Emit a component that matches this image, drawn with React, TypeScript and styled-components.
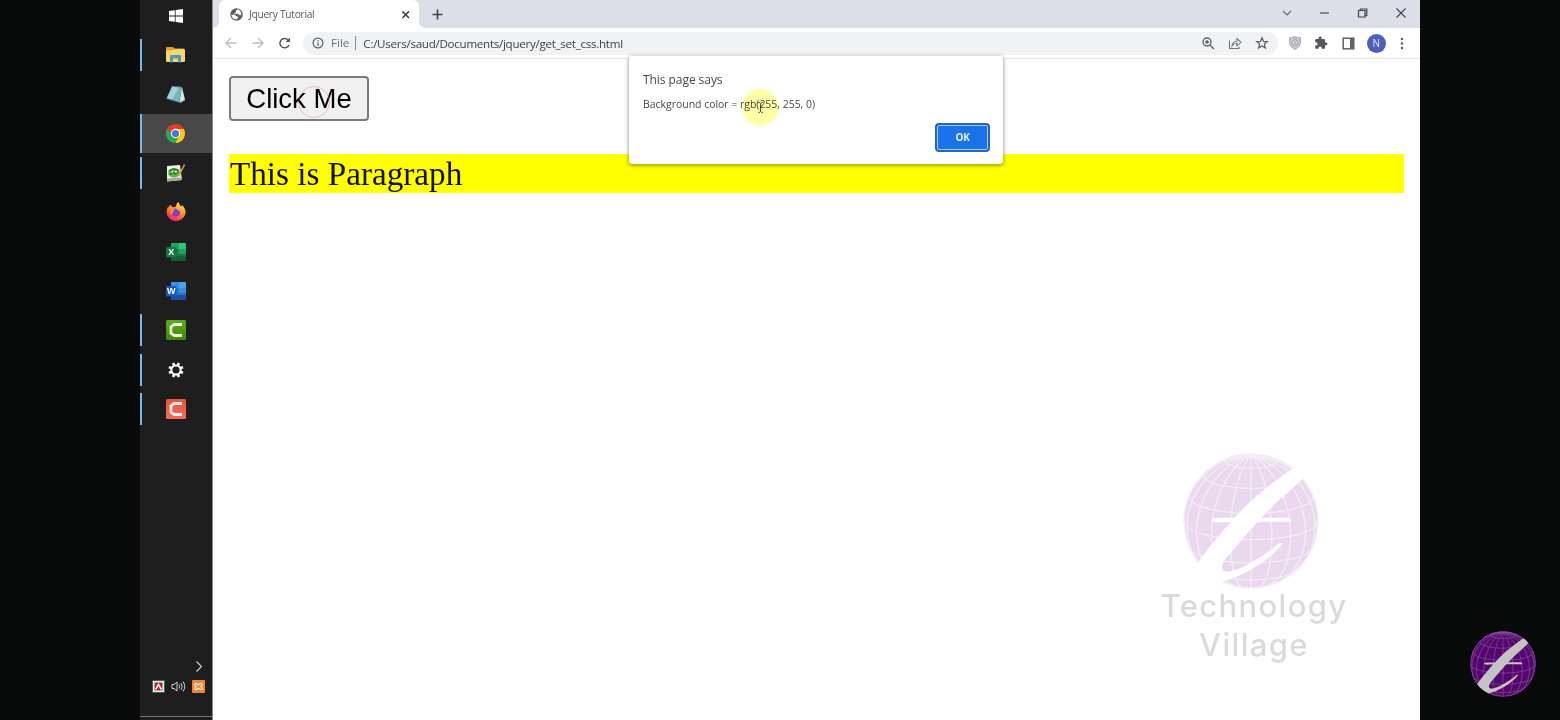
import React from "react";
import styled, { createGlobalStyle, css } from "styled-components";

const Global = createGlobalStyle`
  * { box-sizing: border-box; }
  body { margin: 0; background: #080b0a; overflow: hidden; }
`;

const ui = css`font-family: "Open Sans", "Noto Sans", sans-serif;`;

const Screen = styled.div`
  display: grid;
  grid-template-columns: 140px 73px 1207px 140px;
  width: 1560px;
  height: 720px;
  overflow: hidden;
  background: #080b0a;
`;

const Gutter = styled.div`
  display: flex;
  align-items: flex-end;
  justify-content: flex-end;
  padding: 0 24px 23px 0;
  background: #080b0a;
`;

/* ---------- Taskbar ---------- */

const Taskbar = styled.nav`
  display: flex;
  flex-direction: column;
  justify-content: space-between;
  height: 720px;
  background: #1e1e1e;
  border-right: 1px solid #8a8a8a;
`;

const AppList = styled.div`
  display: flex;
  flex-direction: column;
  margin-top: -4px;
`;

const AppSlot = styled.div<{ $running?: boolean; $active?: boolean }>`
  display: grid;
  grid-template-columns: 2px 1fr 3px;
  align-items: center;
  justify-items: center;
  height: 39.35px;
  background: ${(p) => (p.$active ? "#484848" : "transparent")};
  &::before {
    content: "";
    width: 2px;
    height: ${(p) => (p.$active ? "39px" : "32px")};
    background: ${(p) => (p.$running || p.$active ? "#76b9ed" : "transparent")};
  }
  svg { display: block; }
`;

const Tray = styled.div`
  display: flex;
  flex-direction: column;
  height: 61px;
`;

const TrayMore = styled.div`
  display: flex;
  justify-content: flex-end;
  padding-right: 9px;
  height: 20px;
`;

const TrayIcons = styled.div`
  display: flex;
  align-items: center;
  gap: 6px;
  padding-left: 12px;
  height: 15px;
`;

const TrayEdge = styled.div`
  margin-top: 22px;
  height: 1px;
  background: #777;
`;

/* ---------- Browser ---------- */

const Browser = styled.main`
  display: flex;
  flex-direction: column;
  height: 720px;
  background: #fff;
`;

const TabStrip = styled.div`
  display: flex;
  align-items: stretch;
  height: 28px;
  padding-left: 6px;
  background: #dcdfe8;
`;

const Tab = styled.div`
  position: relative;
  display: flex;
  align-items: center;
  width: 200px;
  padding: 0 8px 0 11px;
  background: #fff;
  border-radius: 6px 6px 0 0;
  &::before, &::after {
    content: "";
    position: absolute;
    bottom: 0;
    width: 6px;
    height: 6px;
  }
  &::before { left: -6px; background: radial-gradient(circle at 0 0, transparent 5.5px, #fff 6px); }
  &::after { right: -6px; background: radial-gradient(circle at 100% 0, transparent 5.5px, #fff 6px); }
`;

const TabTitle = styled.span`
  ${ui}
  flex: 1;
  margin-left: 6px;
  font-size: 10.2px;
  line-height: 14px;
  letter-spacing: -0.27px;
  color: #55585c;
`;

const NewTab = styled.div`
  display: flex;
  align-items: center;
  margin-left: 12px;
`;

const WindowButtons = styled.div`
  display: flex;
  align-items: center;
  margin-left: auto;
  padding-right: 13px;
  gap: 26px;
  padding-bottom: 3px;
  svg { display: block; }
`;

const Toolbar = styled.div`
  display: flex;
  align-items: center;
  height: 31px;
  padding: 0 16px 0 11px;
  border-bottom: 1px solid #e6e7e9;
`;

const NavButtons = styled.div`
  display: flex;
  align-items: center;
  gap: 13px;
`;

const Omnibox = styled.div`
  ${ui}
  display: flex;
  align-items: center;
  width: 975px;
  height: 23px;
  margin-left: 11px;
  padding: 0 9px 0 9px;
  border-radius: 12px;
  background: #f0f2f4;
  font-size: 11.6px;
`;

const Scheme = styled.span`
  margin-left: 7px;
  padding-right: 6px;
  line-height: 14px;
  border-right: 1px solid #85888c;
  color: #6d7074;
`;

const Url = styled.span`
  flex: 1;
  margin-left: 7px;
  letter-spacing: -0.28px;
  color: #3f4246;
`;

const BoxActions = styled.div`
  display: flex;
  align-items: center;
  gap: 13px;
`;

const Extensions = styled.div`
  display: flex;
  align-items: center;
  justify-content: space-between;
  width: 115px;
  margin-left: auto;
`;

const Avatar = styled.span`
  ${ui}
  display: grid;
  place-items: center;
  width: 19px;
  height: 19px;
  margin: 0 1px 0 -1px;
  border-radius: 50%;
  background: #4e5fbb;
  color: #e4e7f8;
  font-size: 10px;
`;

const Viewport = styled.section`
  position: relative;
  flex: 1;
  padding: 17px 16px 0;
`;

const ClickButton = styled.button`
  display: block;
  width: 140px;
  height: 45px;
  padding: 0;
  border: 2px solid #7b7b7b;
  border-radius: 4px;
  background: #f0f0f0;
  color: #000;
  font: 27.5px "Liberation Sans", Arial, sans-serif;
`;

const Paragraph = styled.p`
  margin: 33px 0 0;
  padding-left: 1px;
  height: 39px;
  background: #ff0;
  color: #111;
  font: 33.2px/40px "Liberation Serif", "Times New Roman", serif;
`;

const ClickRipple = styled.span`
  position: absolute;
  left: 85px;
  top: 27px;
  width: 32px;
  height: 32px;
  border: 1.5px solid rgba(240, 110, 125, 0.4);
  border-radius: 50%;
`;

const Dialog = styled.div`
  ${ui}
  position: absolute;
  left: 416px;
  top: -3px;
  display: flex;
  flex-direction: column;
  width: 374px;
  height: 108px;
  padding: 16px 13px 12px 14px;
  border-radius: 3px;
  background: #fff;
  box-shadow: 0 1px 4px rgba(0, 0, 0, 0.5);
  color: #46484b;
`;

const DialogTitle = styled.div`
  font-size: 12px;
  line-height: 16px;
  letter-spacing: -0.06px;
`;

const DialogText = styled.div`
  margin-top: 9px;
  font-size: 10.5px;
  line-height: 14px;
  letter-spacing: -0.03px;
`;

const OkButton = styled.button`
  ${ui}
  align-self: flex-end;
  margin-top: auto;
  width: 55px;
  height: 29px;
  padding: 0 0 1px;
  border: 2px solid #1f66ca;
  border-radius: 4px;
  box-shadow: inset 0 0 0 1px #a9cbf8;
  background: #1a73e8;
  color: #e8f2ff;
  font-size: 10px;
  font-weight: 700;
  letter-spacing: -0.3px;
`;

const Pointer = styled.div`
  position: absolute;
  left: 529px;
  top: 30px;
  display: grid;
  place-items: center;
  width: 37px;
  height: 37px;
  border-radius: 50%;
  background: #ffffa8;
  mix-blend-mode: multiply;
`;

const Watermark = styled.div`
  position: absolute;
  right: 66px;
  top: 394px;
  display: flex;
  flex-direction: column;
  align-items: center;
  width: 200px;
  color: #dadada;
  font: 500 31px/38.5px Inter, Lato, sans-serif;
  letter-spacing: 1.35px;
  svg { display: block; margin: 0 0 -2px -6px; }
`;

/* ---------- Globe logo ---------- */

const TILT = (16 * Math.PI) / 180;

function arc(points: [number, number][]) {
  let d = "";
  let pen = false;
  points.forEach(([lat, lon]) => {
    const f = (lat * Math.PI) / 180;
    const l = (lon * Math.PI) / 180;
    const depth = Math.sin(f) * Math.sin(TILT) + Math.cos(f) * Math.cos(l) * Math.cos(TILT);
    if (depth < 0) {
      pen = false;
      return;
    }
    const x = 100 * Math.cos(f) * Math.sin(l);
    const y = -100 * (Math.sin(f) * Math.cos(TILT) - Math.cos(f) * Math.cos(l) * Math.sin(TILT));
    d += `${pen ? "L" : "M"}${x.toFixed(1)} ${y.toFixed(1)}`;
    pen = true;
  });
  return d;
}

const range = (from: number, to: number, step: number) =>
  Array.from({ length: Math.floor((to - from) / step) + 1 }, (_, i) => from + i * step);

const GRID = [
  ...[67.5, 45, 22.5, 0, -22.5, -45].map((lat) => arc(range(-180, 180, 4).map((lon) => [lat, lon]))),
  ...range(-180, 162, 18).map((lon) => arc(range(-90, 90, 4).map((lat) => [lat, lon]))),
].join("");

type GlobeProps = { size: number; fill: string; line: string; mark: string; id: string };

const Globe = ({ size, fill, line, mark, id }: GlobeProps) => (
  <svg width={size} height={size} viewBox="-101 -101 202 202">
    <clipPath id={id}><circle r="101" /></clipPath>
    <g clipPath={`url(#${id})`}>
      <circle r="100" fill={fill} />
      <path d={GRID} fill="none" stroke={line} strokeWidth="2.1" />
      <circle r="99" fill="none" stroke={line} strokeWidth="2" />
      <path
        fill={mark}
        d="M64 -80C40 -62 10 -42 -12 -18C-32 3 -58 32 -82 66L-50 92C-15 84 28 60 47 33C45 31 40 34 36 38C16 54 -14 72 -32 75C-46 77 -46 66 -36 54C-11 25 22 -15 52 -40L82 -67Z"
      />
      <path fill={mark} d="M-58 -2C-56 -6 -48 -4 56 -5Q62 -2 58 1L-20 1C-48 2 -58 4 -58 -2Z" />
    </g>
  </svg>
);

/* ---------- Taskbar icons ---------- */

const WindowsIcon = () => (
  <svg width="14" height="14" viewBox="0 0 14 14" fill="#fff">
    <path d="M0 2.1L5.8 1.2V6.6H0ZM6.6 1.1L14 0V6.6H6.6ZM0 7.4H5.8V12.8L0 11.9ZM6.6 7.4H14V14L6.6 12.9Z" />
  </svg>
);

const FolderIcon = () => (
  <svg width="19" height="16" viewBox="0 0 19 16">
    <path d="M0 1Q0 0 1 0H7L9 1.5H18V7H0Z" fill="#e0a128" />
    <path d="M0 3.5L8 3L9.5 2H18Q19 2 19 3V14Q19 15 18 15H1Q0 15 0 14Z" fill="#fbd569" />
    <path d="M4 15.5V9Q4 8 5 8H14Q15 8 15 9V15.5H12V11.5H7V15.5Z" fill="#4b9cc0" />
  </svg>
);

const NotebookIcon = () => (
  <svg width="20" height="19" viewBox="0 0 20 19">
    <path d="M6 1L16 2L19 15L14 18L0 14Z" fill="#486f79" />
    <path d="M6 1.5L16 2.5L13 17L1 13Z" fill="#76b4c2" />
    <path d="M6.5 2L13 2.6L6 14.6L1 13Z" fill="#b5dbe2" opacity=".7" />
    <path d="M16 2.5L19 15L13.5 17.2Z" fill="#dbe8e8" />
    <path d="M6 1.2L16 2.2" stroke="#778d90" strokeDasharray="1 1" />
    <path d="M14 18L19 15" stroke="#967b50" />
  </svg>
);

const ChromeIcon = () => (
  <svg width="19" height="19" viewBox="-10 -10 20 20">
    <path d="M0 0L-8.66 -5A10 10 0 0 1 8.66 -5Z" fill="#e33b2e" />
    <path d="M0 0L8.66 -5A10 10 0 0 1 0 10Z" fill="#fbc916" />
    <path d="M0 0L0 10A10 10 0 0 1 -8.66 -5Z" fill="#2da94f" />
    <path d="M0 -4.8H8.8L4 3Z" fill="#fbc916" />
    <path d="M4.1 2.4L-0.4 10L-4 3Z" fill="#2da94f" />
    <path d="M-4.1 2.4L-8.7 -5L0 -4.8Z" fill="#e33b2e" />
    <path d="M-4.1 2.4L-8.7 -5A10 10 0 0 0 -.4 10L2 5Z" fill="#2da94f" />
    <circle r="4.9" fill="#fff" />
    <circle r="3.8" fill="#3b7be8" />
  </svg>
);

const NotepadPlusIcon = () => (
  <svg width="19" height="18" viewBox="0 0 19 18">
    <path d="M1 2L14 1L16 16L1 17.5Z" fill="#e9efe4" />
    <path d="M1 14.5L16 13.5V16L1 17.5Z" fill="#a3a99a" />
    <ellipse cx="8" cy="9" rx="6" ry="4.6" fill="#5fb947" />
    <path d="M3 7Q8 3 13 7M4 11L7 8L9 10L12 8" stroke="#276f25" strokeWidth="1.4" fill="none" />
    <circle cx="6.5" cy="7.8" r="1" fill="#eaf7dc" />
    <circle cx="10" cy="7.8" r="1" fill="#eaf7dc" />
    <path d="M18.5 0.5L12.8 12" stroke="#d59b35" strokeWidth="1.6" />
  </svg>
);

const FirefoxIcon = () => (
  <svg width="20" height="20" viewBox="0 0 20 20">
    <defs>
      <linearGradient id="fox" x1=".8" y1="0" x2=".25" y2="1">
        <stop offset="0" stopColor="#fff04a" />
        <stop offset=".4" stopColor="#ff9a2e" />
        <stop offset=".75" stopColor="#ff4a45" />
        <stop offset="1" stopColor="#e8257a" />
      </linearGradient>
    </defs>
    <path d="M12.5 0Q13 3 15.5 4.5L16 3Q20 7 19.5 11A9.6 9.3 0 0 1 .5 11Q.2 7 2.5 4V5.5Q4 3 5 2.8Q5 4.5 7 5.2Q10.500 5 10.2 3.2Q10.600 1 12.500 0Z" fill="url(#fox)" />
    <circle cx="10" cy="10.5" r="4" fill="#7b3fc9" />
    <path d="M3.500 6.500Q6 5 9 7.500Q7 8 7.500 10Q6 11 6 12.500Q3 10 3.500 6.500Z" fill="#ff8a2b" />
    <path d="M10 6Q14 6 14.500 10Q13 8 11.500 8Z" fill="#ffae34" />
  </svg>
);

type OfficeProps = { shades: string[]; badge: string; letter: string };

const OfficeLetter = styled.text`
  font: 700 9px "Liberation Sans", sans-serif;
  fill: #fff;
`;

const OfficeIcon = ({ shades, badge, letter }: OfficeProps) => (
  <svg width="20" height="18" viewBox="0 0 20 18">
    <rect x="5" width="15" height="18" rx="1" fill={shades[2]} />
    <path d="M5 1Q5 0 6 0H12.500V6H5Z" fill={shades[1]} />
    <path d="M12.500 0H19Q20 0 20 1V6H12.500Z" fill={shades[0]} />
    <rect x="12.500" y="6" width="7.500" height="5" fill={shades[1]} />
    <rect x="5" y="13" width="15" height="5" rx="1" fill={shades[3]} />
    <rect y="4" width="10.500" height="10.500" rx="1" fill={badge} />
    <OfficeLetter x="5.200" y="12.400" textAnchor="middle">{letter}</OfficeLetter>
  </svg>
);

const CamtasiaIcon = ({ from, to }: { from: string; to: string }) => (
  <svg width="20" height="20" viewBox="0 0 20 20">
    <defs>
      <linearGradient id={`cam${from.slice(1)}`} x1="0" y1="0" x2="0" y2="1">
        <stop offset="0" stopColor={from} />
        <stop offset="1" stopColor={to} />
      </linearGradient>
    </defs>
    <rect width="20" height="20" rx="1.500" fill={`url(#cam${from.slice(1)})`} />
    <path d="M16 4.500H8.200L5 7V13L8.200 15.500H16" fill="none" stroke="#fff" strokeOpacity=".92" strokeWidth="2.800" />
    <path d="M6.200 6.500V13.500" stroke={to} strokeOpacity=".35" strokeWidth="1" />
  </svg>
);

const GearIcon = () => (
  <svg width="16" height="16" viewBox="-8 -8 16 16">
    <circle r="4.600" fill="none" stroke="#fff" strokeWidth="2" />
    {range(22.5, 337.5, 45).map((a) => (
      <rect key={a} x="-1.300" y="-7.600" width="2.600" height="3" fill="#fff" transform={`rotate(${a})`} />
    ))}
  </svg>
);

const EXCEL = ["#32c37d", "#22a366", "#1a7544", "#185c37"];
const WORD = ["#43a5ee", "#3490e0", "#2373cf", "#1a4f9f"];

const apps: { icon: React.ReactNode; running?: boolean; active?: boolean }[] = [
  { icon: <WindowsIcon /> },
  { icon: <FolderIcon />, running: true },
  { icon: <NotebookIcon /> },
  { icon: <ChromeIcon />, active: true },
  { icon: <NotepadPlusIcon />, running: true },
  { icon: <FirefoxIcon /> },
  { icon: <OfficeIcon shades={EXCEL} badge="#137843" letter="X" /> },
  { icon: <OfficeIcon shades={WORD} badge="#1b58ba" letter="W" /> },
  { icon: <CamtasiaIcon from="#5fa91c" to="#3f8a05" />, running: true },
  { icon: <GearIcon />, running: true },
  { icon: <CamtasiaIcon from="#ee5340" to="#f56a5a" />, running: true },
];

const Glyph = ({ w = 14, h = w, box = `0 0 ${w} ${h}`, color = "#5f6368", sw = 1.3, children }: {
  w?: number; h?: number; box?: string; color?: string; sw?: number; children: React.ReactNode;
}) => (
  <svg width={w} height={h} viewBox={box} fill="none" stroke={color} strokeWidth={sw}>{children}</svg>
);

export default function App() {
  return (
    <>
      <Global />
      <Screen>
        <Gutter />
        <Taskbar>
          <AppList>
            {apps.map((a, i) => (
              <AppSlot key={i} $running={a.running} $active={a.active}>{a.icon}</AppSlot>
            ))}
          </AppList>
          <Tray>
            <TrayMore>
              <Glyph w={8} h={14} color="#d8d8d8" sw={1.1}><path d="M1.500 2.500L6.500 7.500L1.500 12.500" /></Glyph>
            </TrayMore>
            <TrayIcons>
              <svg width="13" height="13" viewBox="0 0 13 13">
                <rect width="13" height="13" fill="#2c6a4c" />
                <rect x="1" y="1" width="11" height="11" fill="#f2eeee" />
                <rect x="2.500" y="2.500" width="8" height="8" fill="#b5202c" />
                <path d="M3.500 9.500L6.500 4.500L9.500 9.500" fill="none" stroke="#fff" strokeWidth="1.500" />
              </svg>
              <Glyph w={15} h={13} color="#d0d0d0" sw={1}>
                <path d="M1 4.500H3L6 2V11L3 8.500H1ZM8 4.500Q9.500 6.500 8 8.500M10 3Q12.500 6.500 10 10M12 1.500Q15.500 6.500 12 11.500" />
              </Glyph>
              <svg width="13" height="13" viewBox="0 0 13 13">
                <rect width="13" height="13" rx="1" fill="#ef8336" />
                <path d="M4.500 3.500Q2.500 3 2.800 5L4.200 6.500L2.800 8Q2.500 10 4.500 9.500L6.500 8.300L8.500 9.500Q10.500 10 10.200 8L8.800 6.500L10.200 5Q10.500 3 8.500 3.500L6.500 4.700Z" fill="none" stroke="#ffe9d5" strokeWidth="1.300" />
              </svg>
            </TrayIcons>
            <TrayEdge />
          </Tray>
        </Taskbar>

        <Browser>
          <TabStrip>
            <Tab>
              <svg width="13" height="13" viewBox="0 0 24 24">
                <circle cx="12" cy="12" r="11.500" fill="#5a5d61" />
                <path d="M2.500 12L9 12.500L12 15.500H15V18L12 21L7 20.500A10 10 0 0 1 2.500 12ZM14 2.500L11 5V8L8 9.500L10 11L14 10L16 12.500L20.500 13.500A9 9 0 0 0 14 2.500Z" fill="#fff" />
              </svg>
              <TabTitle>Jquery Tutorial</TabTitle>
              <Glyph w={11} color="#3c3f43" sw={1.5}><path d="M2.400 2.400L9 9M9 2.400L2.400 9" /></Glyph>
            </Tab>
            <NewTab>
              <Glyph w={13} color="#404347" sw={1.6}><path d="M6.500 1.500V11.500M1.500 6.500H11.500" /></Glyph>
            </NewTab>
            <WindowButtons>
              <Glyph w={12} color="#6a6d72" sw={1.2}><path d="M2 4L6 8L10 4" /></Glyph>
              <Glyph w={12} color="#444" sw={1.1}><path d="M1 6H10" /></Glyph>
              <Glyph w={12} color="#444" sw={1.2}><path d="M1.500 3.500H8V10H1.500ZM2.800 3.500L3.500 2H9.800V8.500L8 9" /></Glyph>
              <Glyph w={12} color="#444" sw={1.1}><path d="M1.500 1.500L10.500 10.500M10.500 1.500L1.500 10.500" /></Glyph>
            </WindowButtons>
          </TabStrip>

          <Toolbar>
            <NavButtons>
              <Glyph color="#babcbe"><path d="M12.500 7H2.500M7 2L2 7L7 12" /></Glyph>
              <Glyph color="#babcbe"><path d="M1.500 7H11.500M7 2L12 7L7 12" /></Glyph>
              <Glyph color="#55585c" sw={1.5}>
                <path d="M11 9A4.700 4.700 0 1 1 10 3.800L11 5" /><path d="M12 1.500V6H7.500Z" fill="#55585c" stroke="none" />
              </Glyph>
            </NavButtons>
            <Omnibox>
              <Glyph w={12} sw={1.2}><circle cx="6" cy="6" r="4.900" /><path d="M6 5.300V9M6 3V4.300" /></Glyph>
              <Scheme>File</Scheme>
              <Url>C:/Users/saud/Documents/jquery/get_set_css.html</Url>
              <BoxActions>
                <Glyph sw={1.4}><circle cx="6" cy="6" r="4" /><path d="M9 9L13 13M4 6H8M6 4V8" /></Glyph>
                <Glyph color="#75787c" sw={1.1}><path d="M1.500 4.500V12.500H11V10.500M4 10Q4.500 5.500 9 5.300V2.500L13 6.300L9 9.800V7.300Q6 7.300 4 10Z" /></Glyph>
                <Glyph sw={1.3}><path d="M7 1.800L8.500 5.300L12.300 5.600L9.400 8.100L10.300 11.900L7 9.900L3.700 11.900L4.600 8.100L1.700 5.600L5.500 5.300Z" /></Glyph>
              </BoxActions>
            </Omnibox>
            <Extensions>
              <svg width="12" height="14" viewBox="0 0 12 14">
                <path d="M6 .5Q9 2 11.500 1.800V7Q11 11 6 13.500Q1 11 .5 7V1.800Q3 2 6 .5Z" fill="#c4c8d2" stroke="#a6aab6" />
                <circle cx="6" cy="6.500" r="2.800" fill="#dde0e8" stroke="#8b90a2" strokeWidth=".8" />
                <path d="M6 5V8" stroke="#8b90a2" />
              </svg>
              <svg width="14" height="14" viewBox="0 0 24 24" fill="#55585c">
                <path d="M20.500 11H19V7a2 2 0 0 0-2-2h-4V3.500a2.500 2.500 0 0 0-5 0V5H4a2 2 0 0 0-2 2v3.800h1.500a2.700 2.700 0 0 1 0 5.400H2V20a2 2 0 0 0 2 2h3.800v-1.500a2.700 2.700 0 0 1 5.400 0V22H17a2 2 0 0 0 2-2v-4h1.500a2.500 2.500 0 0 0 0-5z" />
              </svg>
              <svg width="13" height="13" viewBox="0 0 13 13">
                <rect x="1.200" y="1.200" width="10.600" height="10.600" fill="#fff" stroke="#606368" strokeWidth="1.500" />
                <rect x="8" y="1" width="4" height="11" fill="#606368" />
              </svg>
              <Avatar>N</Avatar>
              <svg width="4" height="13" viewBox="0 0 4 13" fill="#55585c">
                <circle cx="2" cy="2" r="1.200" /><circle cx="2" cy="6.500" r="1.200" /><circle cx="2" cy="11" r="1.200" />
              </svg>
            </Extensions>
          </Toolbar>

          <Viewport>
            <ClickButton>Click Me</ClickButton>
            <Paragraph>This is Paragraph</Paragraph>
            <ClickRipple />
            <Watermark>
              <Globe id="globe-light" size={136} fill="#ead8ef" line="#f5ebf7" mark="#fff" />
              <span>Technology</span>
              <span>Village</span>
            </Watermark>
            <Dialog>
              <DialogTitle>This page says</DialogTitle>
              <DialogText>Background color = rgb(255, 255, 0)</DialogText>
              <OkButton>OK</OkButton>
            </Dialog>
            <Pointer>
              <Glyph w={7} h={13} color="#555538" sw={1}><path d="M1 1.500Q3 1.500 3.500 2.500Q4 1.500 6 1.500M3.500 2.500V11M1 11.500Q3 11.500 3.500 10.500Q4 11.500 6 11.500" /></Glyph>
            </Pointer>
          </Viewport>
        </Browser>
        <Gutter>
          <Globe id="globe-dark" size={66} fill="#56076f" line="#85529a" mark="#c4c4c4" />
        </Gutter>
      </Screen>
    </>
  );
}
